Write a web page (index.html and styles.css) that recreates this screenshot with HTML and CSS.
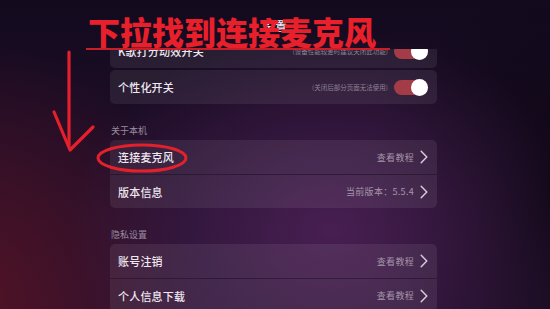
FILE: index.html
```html
<!DOCTYPE html>
<html lang="zh">
<head>
<meta charset="utf-8">
<link rel="stylesheet" href="styles.css">
</head>
<body>
<div class="screen">
  <header class="top">
    <div class="page-title">设置</div>
  </header>
  <div class="viewport">
    <div class="list">
      <div class="card first">
        <div class="row">
          <span class="label">K歌打分动效开关</span>
          <span class="hint">(设备性能较差时建议关闭此功能)</span>
          <span class="toggle"><span class="knob"></span></span>
        </div>
      </div>
      <div class="card">
        <div class="row">
          <span class="label">个性化开关</span>
          <span class="hint">(关闭后部分页面无法使用)</span>
          <span class="toggle"><span class="knob"></span></span>
        </div>
      </div>

      <div class="section">关于本机</div>
      <div class="card">
        <div class="row">
          <span class="label">连接麦克风</span>
          <span class="value">查看教程</span>
          <svg class="chev" viewBox="0 0 8 14"><path d="M1.2 1.2 L6.8 7 L1.2 12.8"/></svg>
        </div>
        <div class="row">
          <span class="label">版本信息</span>
          <span class="value">当前版本：5.5.4</span>
          <svg class="chev" viewBox="0 0 8 14"><path d="M1.2 1.2 L6.8 7 L1.2 12.8"/></svg>
        </div>
      </div>

      <div class="section">隐私设置</div>
      <div class="card">
        <div class="row">
          <span class="label">账号注销</span>
          <span class="value">查看教程</span>
          <svg class="chev" viewBox="0 0 8 14"><path d="M1.2 1.2 L6.8 7 L1.2 12.8"/></svg>
        </div>
        <div class="row">
          <span class="label">个人信息下载</span>
          <span class="value">查看教程</span>
          <svg class="chev" viewBox="0 0 8 14"><path d="M1.2 1.2 L6.8 7 L1.2 12.8"/></svg>
        </div>
      </div>
    </div>
  </div>

  <div class="annot-title">下拉找到连接麦克风</div>
  <svg class="annot" viewBox="0 0 550 309" width="550" height="309">
    <line x1="86" y1="49" x2="390" y2="49" stroke="#c81e28" stroke-width="2"/>
    <path d="M69 52 L69 146" stroke="#e3202b" stroke-width="3.2" fill="none" stroke-linecap="round"/>
    <path d="M54 112 L70 150 L93 127" stroke="#e3202b" stroke-width="3.2" fill="none" stroke-linecap="round" stroke-linejoin="round"/>
    <ellipse cx="142" cy="158" rx="44" ry="13" stroke="#e3202b" stroke-width="3" fill="none"/>
  </svg>
</div>
</body>
</html>
```
FILE: styles.css
```css
* { box-sizing: border-box; }
html, body {
  margin: 0;
  padding: 0;
  width: 550px;
  height: 309px;
  overflow: hidden;
}
body {
  font-family: "Noto Sans CJK SC", "Noto Sans", sans-serif;
  background: #160b20;
}
.screen {
  position: relative;
  width: 550px;
  height: 309px;
  overflow: hidden;
  display: flex;
  flex-direction: column;
  background:
    radial-gradient(ellipse 260px 200px at 330px 230px, rgba(78, 34, 88, 0.85), rgba(78, 34, 88, 0) 100%),
    radial-gradient(ellipse 220px 260px at -20px 300px, rgba(82, 18, 36, 0.95), rgba(82, 18, 36, 0) 100%),
    radial-gradient(ellipse 200px 220px at 560px 200px, rgba(10, 5, 16, 0.9), rgba(10, 5, 16, 0) 100%),
    linear-gradient(180deg, #130a1e 0%, #1c0d26 40%, #271231 100%);
}
.top {
  height: 49px;
  flex: none;
  display: flex;
  justify-content: center;
  padding-top: 18px;
}
.page-title {
  color: #f4eef6;
  font-size: 12px;
  line-height: 16px;
  font-weight: 500;
}
.viewport {
  flex: 1;
  overflow: hidden;
}
.list {
  margin-top: -15px;
  padding-left: 110px;
  width: 437px;
  display: flex;
  flex-direction: column;
}
.card {
  background: rgba(255, 255, 255, 0.075);
  border-radius: 5px;
  display: flex;
  flex-direction: column;
}
.card + .card { margin-top: 2px; }
.row {
  height: 34px;
  display: flex;
  align-items: center;
  padding: 0 9px 0 8px;
  gap: 4px;
}
.row + .row { border-top: 1px solid rgba(20, 8, 28, 0.45); }
.label {
  color: #efe8f1;
  font-size: 11px;
  font-weight: 500;
  flex: 1;
  letter-spacing: 0.2px;
}
.hint {
  color: #8f8196;
  font-size: 6.5px;
  margin-right: 2px;
}
.value {
  color: #a596aa;
  font-size: 9px;
  letter-spacing: 0.3px;
}
.chev {
  width: 8px;
  height: 14px;
  margin-left: 2px;
  fill: none;
  stroke: #d6cadb;
  stroke-width: 1.5;
  stroke-linecap: round;
  stroke-linejoin: round;
}
.toggle {
  width: 34px;
  height: 15px;
  border-radius: 8px;
  background: #a43c48;
  display: flex;
  align-items: center;
  justify-content: flex-end;
}
.knob {
  width: 17px;
  height: 17px;
  border-radius: 50%;
  background: #ffffff;
}
.section {
  color: #9a8ca1;
  font-size: 9px;
  line-height: 12px;
  margin: 21px 0 3px 1px;
}
.annot-title {
  position: absolute;
  left: 88px;
  top: 11px;
  font-size: 32px;
  line-height: 40px;
  font-weight: 900;
  color: #e8202b;
  letter-spacing: 0;
  white-space: nowrap;
}
.annot {
  position: absolute;
  left: 0;
  top: 0;
  pointer-events: none;
}
```
